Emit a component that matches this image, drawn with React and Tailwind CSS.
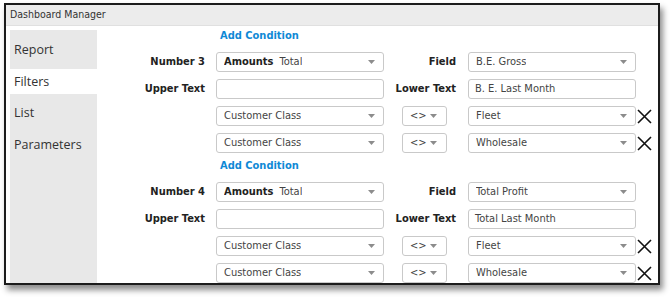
import React from 'react';

const formFont = { fontFamily: '"DejaVu Sans Condensed", "DejaVu Sans", sans-serif' };

function Caret() {
  return (
    <svg width="7" height="4" viewBox="0 0 7 4" className="shrink-0">
      <path d="M0 0 L7 0 L3.5 4 Z" fill="#8c8c8c" />
    </svg>
  );
}

function Select({ width, children, pr = 'pr-[8px]' }) {
  return (
    <div
      className={`h-[20px] ${width} flex items-center justify-between pl-[7px] ${pr} border border-[#c9c9c9] rounded-[3px] bg-white text-[#444]`}
    >
      <span className="truncate">{children}</span>
      <Caret />
    </div>
  );
}

function TextBox({ value }) {
  return (
    <div className="h-[20px] w-[168px] flex items-center px-[6px] border border-[#c9c9c9] rounded-[3px] bg-white text-[#444]">
      {value}
    </div>
  );
}

function RemoveIcon() {
  return (
    <svg width="15" height="15" viewBox="0 0 15 15" className="ml-[1px]">
      <path d="M1 1 L14 14 M14 1 L1 14" stroke="#111" strokeWidth="1.6" />
    </svg>
  );
}

function FieldRow({ label, left, label2, right }) {
  return (
    <div className="flex items-center h-[20px]">
      <div className="w-[108px] text-right font-bold text-[#222]">{label}</div>
      <div className="ml-[11px]">{left}</div>
      <div className="w-[72px] text-right font-bold text-[#222]">{label2}</div>
      <div className="ml-[12px]">{right}</div>
    </div>
  );
}

function ConditionRow({ value }) {
  return (
    <div className="flex items-center h-[20px]">
      <div className="w-[108px]" />
      <div className="ml-[11px]">
        <Select width="w-[168px]">Customer Class</Select>
      </div>
      <div className="ml-[18px]">
        <Select width="w-[45px]" pr="pr-[9px]">&lt;&gt;</Select>
      </div>
      <div className="ml-[21px]">
        <Select width="w-[168px]">{value}</Select>
      </div>
      <RemoveIcon />
    </div>
  );
}

function Section({ number, field, lower, first }) {
  return (
    <div className={first ? 'mt-[1px]' : 'mt-[5px]'}>
      <div className="h-[16px] flex items-center ml-[123px] font-bold text-[#1089d6]">
        Add Condition
      </div>
      <div className="mt-[8px] flex flex-col gap-[7px]">
        <FieldRow
          label={number}
          left={
            <Select width="w-[168px]">
              <span className="font-bold text-[#222]">Amounts</span>
              <span className="ml-[6px]">Total</span>
            </Select>
          }
          label2="Field"
          right={<Select width="w-[168px]">{field}</Select>}
        />
        <FieldRow label="Upper Text" left={<TextBox value="" />} label2="Lower Text" right={<TextBox value={lower} />} />
        <ConditionRow value="Fleet" />
        <ConditionRow value="Wholesale" />
      </div>
    </div>
  );
}

export default function App() {
  const tabs = [
    { name: 'Report', cls: 'h-[39px] pt-[1px]', active: false },
    { name: 'Filters', cls: 'h-[25px] pt-[1px]', active: true },
    { name: 'List', cls: 'h-[35px] pt-[3px]', active: false },
    { name: 'Parameters', cls: 'h-[30px] pt-[2px]', active: false },
  ];

  return (
    <div className="w-[670px] h-[299px] bg-white relative overflow-hidden">
      <div className="ml-[4px] mt-[3px] w-[656px] h-[282px] border-2 border-[#1c1c1c] shadow-[3px_5px_6px_rgba(0,0,0,0.45)] flex flex-col overflow-hidden bg-white">
        <div
          className="h-[21px] shrink-0 bg-[#ececec] border-b border-[#e0e0e0] flex items-center pl-[4px] text-[10.5px] text-[#333]"
          style={formFont}
        >
          Dashboard Manager
        </div>
        <div className="flex-1 flex pl-[4px] pt-[4px] min-h-0">
          <div
            className="w-[87px] bg-[#e8e8e8] flex flex-col text-[12.5px] text-[#333]"
            style={{ fontFamily: '"Open Sans", sans-serif' }}
          >
            {tabs.map((t) => (
              <div key={t.name} className={`${t.cls} shrink-0 flex items-center pl-[4px] ${t.active ? 'bg-white' : ''}`}>
                {t.name}
              </div>
            ))}
          </div>
          <div className="flex-1 -mt-[3px] text-[11px]" style={formFont}>
            <Section number="Number 3" field="B.E. Gross" lower="B. E. Last Month" first />
            <Section number="Number 4" field="Total Profit" lower="Total Last Month" />
          </div>
        </div>
      </div>
    </div>
  );
}
